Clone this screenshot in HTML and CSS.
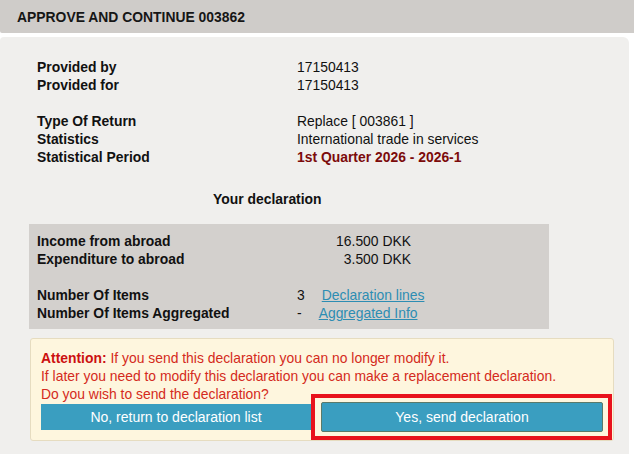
FILE: index.html
```html
<!DOCTYPE html>
<html>
<head>
<meta charset="utf-8">
<link rel="stylesheet" href="styles.css">
</head>
<body>
<div class="header">APPROVE AND CONTINUE 003862</div>
<div class="panel">
  <div class="info">
    <div class="lbl">Provided by</div><div class="val">17150413</div>
    <div class="lbl">Provided for</div><div class="val">17150413</div>
    <div class="blank"></div>
    <div class="lbl">Type Of Return</div><div class="val">Replace [ 003861 ]</div>
    <div class="lbl">Statistics</div><div class="val">International trade in services</div>
    <div class="lbl">Statistical Period</div><div class="val period">1st Quarter 2026 - 2026-1</div>
  </div>
  <div class="subtitle">Your declaration</div>
  <div class="declbox">
    <div class="lbl">Income from abroad</div><div class="val"><span class="amount">16.500 DKK</span></div>
    <div class="lbl">Expenditure to abroad</div><div class="val"><span class="amount">3.500 DKK</span></div>
    <div class="blank"></div>
    <div class="lbl">Number Of Items</div><div class="val">3<a class="link" href="#">Declaration lines</a></div>
    <div class="lbl">Number Of Items Aggregated</div><div class="val">-<a class="link" href="#">Aggregated Info</a></div>
  </div>
  <div class="attention">
    <div class="msg"><b>Attention:</b> If you send this declaration you can no longer modify it.</div>
    <div class="msg">If later you need to modify this declaration you can make a replacement declaration.</div>
    <div class="msg">Do you wish to send the declaration?</div>
    <div class="actions">
      <button class="btn btn-no">No, return to declaration list</button>
      <div class="highlight"><button class="btn btn-yes">Yes, send declaration</button></div>
    </div>
  </div>
</div>
</body>
</html>
```
FILE: styles.css
```css
html, body {
  margin: 0;
  padding: 0;
  background: #ffffff;
}
body {
  font-family: "Liberation Sans", Arial, sans-serif;
  font-size: 13.9px;
  color: #111111;
  width: 634px;
  height: 454px;
  overflow: hidden;
}
.header {
  height: 33px;
  background: #cfccc9;
  font-weight: bold;
  line-height: 34px;
  padding-left: 17px;
  border-bottom-left-radius: 2px;
  color: #161616;
}
.panel {
  margin-top: 4px;
  width: 629px;
  height: 420px;
  box-sizing: border-box;
  background: #f0efed;
  border-top-left-radius: 4px;
  border-top-right-radius: 6px;
  padding: 21px 0 0 29px;
}
.info, .declbox {
  display: grid;
  grid-template-columns: 260px 1fr;
  line-height: 18px;
}
.info {
  padding-left: 8px;
}
.blank {
  grid-column: 1 / 3;
  height: 18px;
}
.lbl {
  font-weight: bold;
}
.period {
  color: #7c0b0b;
  font-weight: bold;
}
.subtitle {
  font-weight: bold;
  line-height: 18px;
  margin-top: 24px;
  padding-left: 184px;
}
.declbox {
  margin-top: 16px;
  width: 520px;
  box-sizing: border-box;
  background: #d3d0cd;
  padding: 8px 0 7px 8px;
}
.amount {
  display: inline-block;
  width: 114px;
  text-align: right;
}
.link {
  color: #2d8db3;
  text-decoration: underline;
  margin-left: 17px;
}
.attention {
  margin-top: 9px;
  margin-left: 1px;
  width: 584px;
  box-sizing: border-box;
  background: #fef6de;
  border: 1px solid #e6dcc0;
  border-radius: 3px;
  padding: 10px 1px 0 10px;
  color: #d42a20;
  line-height: 18px;
}
.attention b {
  color: #cc1010;
}
.actions {
  display: flex;
  align-items: center;
  margin-top: -9px;
}
.btn {
  font-family: "Liberation Sans", Arial, sans-serif;
  font-size: 14px;
  color: #ffffff;
  background: #3a9ec0;
  border: none;
  padding: 0;
  cursor: pointer;
}
.btn-no {
  width: 272px;
  height: 26px;
}
.highlight {
  border: 4px solid #e8121c;
  padding: 4px 5px 4px 6px;
}
.btn-yes {
  display: block;
  width: 282px;
  height: 30px;
  border: 1px solid #5a7a6a;
  border-radius: 2px;
}
```
